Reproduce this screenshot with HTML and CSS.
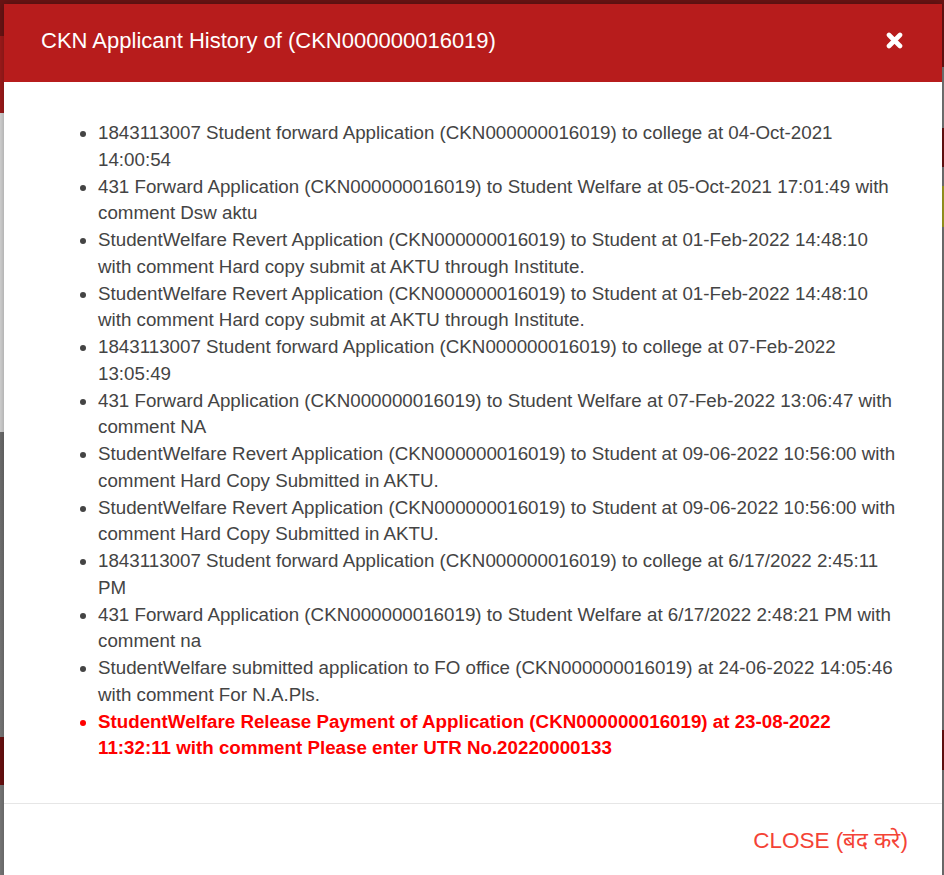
FILE: index.html
```html
<!DOCTYPE html>
<html lang="en">
<head>
<meta charset="utf-8">
<title>CKN Applicant History</title>
<link rel="stylesheet" href="styles.css">
</head>
<body>
<div class="modal">
  <div class="modal-header">
    <h4 class="modal-title">CKN Applicant History of (CKN000000016019)</h4>
    <button class="close-x" aria-label="Close">
      <svg width="17" height="17" viewBox="0 0 17 17"><path d="M3 3 L14 14 M14 3 L3 14" stroke="#fff" stroke-width="4.6" stroke-linecap="round" fill="none"/></svg>
    </button>
  </div>
  <div class="modal-body">
    <ul class="history">
      <li>1843113007 Student forward Application (CKN000000016019) to college at 04-Oct-2021 14:00:54</li>
      <li>431 Forward Application (CKN000000016019) to Student Welfare at 05-Oct-2021 17:01:49 with comment Dsw aktu</li>
      <li>StudentWelfare Revert Application (CKN000000016019) to Student at 01-Feb-2022 14:48:10 with comment Hard copy submit at AKTU through Institute.</li>
      <li>StudentWelfare Revert Application (CKN000000016019) to Student at 01-Feb-2022 14:48:10 with comment Hard copy submit at AKTU through Institute.</li>
      <li>1843113007 Student forward Application (CKN000000016019) to college at 07-Feb-2022 13:05:49</li>
      <li>431 Forward Application (CKN000000016019) to Student Welfare at 07-Feb-2022 13:06:47 with comment NA</li>
      <li>StudentWelfare Revert Application (CKN000000016019) to Student at 09-06-2022 10:56:00 with comment Hard Copy Submitted in AKTU.</li>
      <li>StudentWelfare Revert Application (CKN000000016019) to Student at 09-06-2022 10:56:00 with comment Hard Copy Submitted in AKTU.</li>
      <li>1843113007 Student forward Application (CKN000000016019) to college at 6/17/2022 2:45:11 PM</li>
      <li>431 Forward Application (CKN000000016019) to Student Welfare at 6/17/2022 2:48:21 PM with comment na</li>
      <li>StudentWelfare submitted application to FO office (CKN000000016019) at 24-06-2022 14:05:46 with comment For N.A.Pls.</li>
      <li class="latest">StudentWelfare Release Payment of Application (CKN000000016019) at 23-08-2022 11:32:11 with comment Please enter UTR No.20220000133</li>
    </ul>
  </div>
  <div class="modal-footer">
    <button class="close-btn">CLOSE (बंद करे)</button>
  </div>
</div>
</body>
</html>
```

FILE: styles.css
```css
html, body {
  margin: 0;
  padding: 0;
  height: 100%;
  overflow: hidden;
}

body {
  font-family: "Liberation Sans", Arial, sans-serif;
  background-color: #777777;
  background-image:
    linear-gradient(to bottom,
      #6b1414 0, #6b1414 36px,
      #a01b1b 36px, #a01b1b 113px,
      #d6d6d6 113px, #d6d6d6 432px,
      #6e6e6e 432px, #7a7a7a 737px,
      #6b1010 737px, #6b1010 785px,
      #7a7a7a 785px, #7a7a7a 100%),
    linear-gradient(to bottom,
      #6b1414 0, #6b1414 67px,
      #7a7a7a 67px, #7a7a7a 128px,
      #6b1212 128px, #6b1212 167px,
      #777777 167px, #777777 186px,
      #a3a021 186px, #a3a021 227px,
      #777777 227px, #777777 730px,
      #6b1212 730px, #6b1212 770px,
      #777777 770px, #777777 100%),
    linear-gradient(#6b1414, #6b1414);
  background-size: 4px 100%, 2px 100%, 100% 4px;
  background-position: left top, right top, left top;
  background-repeat: no-repeat;
}

.modal {
  margin: 4px 2px 0 4px;
  background: #ffffff;
  box-shadow: 0 0 8px rgba(0, 0, 0, 0.3);
}

.modal-header {
  height: 78px;
  box-sizing: border-box;
  padding: 0 39px 5px 37px;
  background: #b71c1c;
  display: flex;
  align-items: center;
  justify-content: space-between;
}

.modal-title {
  margin: 0;
  color: #ffffff;
  font-size: 22px;
  font-weight: normal;
  line-height: 1;
}

.close-x {
  border: 0;
  background: transparent;
  padding: 0;
  margin-top: -1px;
  display: flex;
  cursor: pointer;
}

.modal-body {
  padding: 38px 42px 41px 54px;
}

.history {
  margin: 0;
  padding-left: 40px;
  color: #444444;
  font-size: 18.75px;
  line-height: 26.75px;
}

.history .latest {
  color: #ff0000;
  font-weight: bold;
}

.modal-footer {
  border-top: 1px solid #e6e6e6;
  height: 90px;
  display: flex;
  justify-content: flex-end;
  align-items: flex-start;
  padding: 22px 34px 0 0;
  box-sizing: border-box;
}

.close-btn {
  border: 0;
  background: transparent;
  padding: 0;
  color: #f44336;
  font-family: "Liberation Sans", Arial, sans-serif;
  font-size: 22.5px;
  line-height: 30px;
  cursor: pointer;
}
```
